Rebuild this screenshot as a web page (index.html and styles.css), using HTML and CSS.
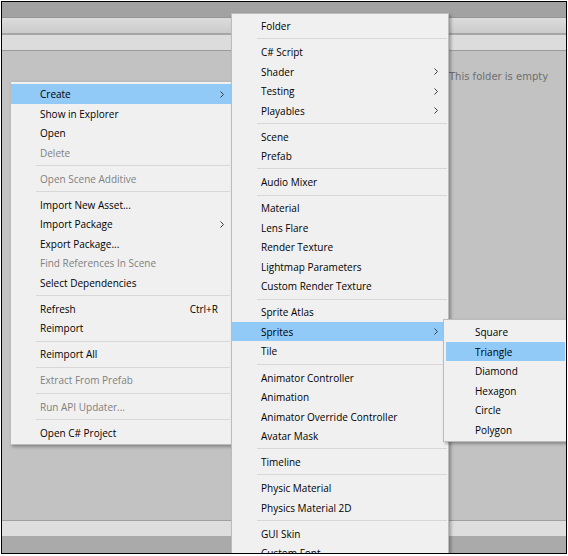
FILE: index.html
```html
<!DOCTYPE html>
<html lang="en">
<head>
  <meta charset="UTF-8" />
  <title>Project - Create menu</title>
  <link rel="stylesheet" href="styles.css">
</head>
<body>
<div class="frame">
  <div class="topbar"></div>
  <div class="toolbar"></div>
  <div class="pathbar"></div>
  <div class="content">
    <div class="tree"></div>
    <div class="assets"><span class="empty-note">This folder is empty</span></div>
  </div>
  <div class="statusbar"></div>
  <div class="footer"></div>

  <!-- context menu -->
  <ul class="menu menu-main">
    <li class="item active">Create <svg class="arrow" width="4" height="7"><path d="M0.5 0.5 L3.5 3.5 L0.5 6.5"/></svg></li>
    <li class="item">Show in Explorer</li>
    <li class="item">Open</li>
    <li class="item disabled">Delete</li>
    <li class="sep"></li>
    <li class="item disabled">Open Scene Additive</li>
    <li class="sep"></li>
    <li class="item">Import New Asset...</li>
    <li class="item">Import Package <svg class="arrow" width="4" height="7"><path d="M0.5 0.5 L3.5 3.5 L0.5 6.5"/></svg></li>
    <li class="item">Export Package...</li>
    <li class="item disabled">Find References In Scene</li>
    <li class="item">Select Dependencies</li>
    <li class="sep"></li>
    <li class="item">Refresh <span class="shortcut">Ctrl+R</span></li>
    <li class="item">Reimport</li>
    <li class="sep"></li>
    <li class="item">Reimport All</li>
    <li class="sep"></li>
    <li class="item disabled">Extract From Prefab</li>
    <li class="sep"></li>
    <li class="item disabled">Run API Updater...</li>
    <li class="sep"></li>
    <li class="item">Open C# Project</li>
  </ul>

  <!-- Create submenu -->
  <ul class="menu menu-create">
    <li class="item">Folder</li>
    <li class="sep"></li>
    <li class="item">C# Script</li>
    <li class="item">Shader <svg class="arrow" width="4" height="7"><path d="M0.5 0.5 L3.5 3.5 L0.5 6.5"/></svg></li>
    <li class="item">Testing <svg class="arrow" width="4" height="7"><path d="M0.5 0.5 L3.5 3.5 L0.5 6.5"/></svg></li>
    <li class="item">Playables <svg class="arrow" width="4" height="7"><path d="M0.5 0.5 L3.5 3.5 L0.5 6.5"/></svg></li>
    <li class="sep"></li>
    <li class="item">Scene</li>
    <li class="item">Prefab</li>
    <li class="sep"></li>
    <li class="item">Audio Mixer</li>
    <li class="sep"></li>
    <li class="item">Material</li>
    <li class="item">Lens Flare</li>
    <li class="item">Render Texture</li>
    <li class="item">Lightmap Parameters</li>
    <li class="item">Custom Render Texture</li>
    <li class="sep"></li>
    <li class="item">Sprite Atlas</li>
    <li class="item active">Sprites <svg class="arrow" width="4" height="7"><path d="M0.5 0.5 L3.5 3.5 L0.5 6.5"/></svg></li>
    <li class="item">Tile</li>
    <li class="sep"></li>
    <li class="item">Animator Controller</li>
    <li class="item">Animation</li>
    <li class="item">Animator Override Controller</li>
    <li class="item">Avatar Mask</li>
    <li class="sep"></li>
    <li class="item">Timeline</li>
    <li class="sep"></li>
    <li class="item">Physic Material</li>
    <li class="item">Physics Material 2D</li>
    <li class="sep"></li>
    <li class="item">GUI Skin</li>
    <li class="item">Custom Font</li>
  </ul>

  <!-- Sprites submenu -->
  <ul class="menu menu-sprites">
    <li class="item">Square</li>
    <li class="item active">Triangle</li>
    <li class="item">Diamond</li>
    <li class="item">Hexagon</li>
    <li class="item">Circle</li>
    <li class="item">Polygon</li>
  </ul>
</div>
</body>
</html>
```

FILE: styles.css
```css
html, body {
  margin: 0;
  padding: 0;
  background: #ffffff;
}
.frame {
  position: relative;
  margin: 1px;
  width: 564px;
  height: 551px;
  border: 1px solid #000;
  display: flex;
  flex-direction: column;
  overflow: hidden;
  font-family: "Open Sans", "Noto Sans", sans-serif;
}
.topbar {
  height: 15px;
  background: #a2a2a2;
  border-bottom: 1px solid #959595;
}
.toolbar {
  height: 15px;
  background: linear-gradient(#dcdcdc, #cbcbcb);
  border-bottom: 2px solid #a6a6a6;
}
.pathbar {
  height: 15px;
  background: #dcdcdc;
  border-bottom: 1px solid #9b9b9b;
}
.content {
  flex: 1;
  display: flex;
  background: #c2c2c2;
  border-bottom: 1px solid #a0a0a0;
}
.tree {
  width: 445px;
}
.assets {
  flex: 1;
  padding: 12px 0 0 2px;
}
.empty-note {
  font-family: "DejaVu Sans", sans-serif;
  font-size: 10px;
  color: #6e6e6e;
  white-space: nowrap;
}
.statusbar {
  height: 15px;
  background: #dedede;
}
.footer {
  height: 17px;
  background: #aaaaaa;
}

/* menus */
.menu {
  position: absolute;
  margin: 0;
  padding: 2px 0;
  list-style: none;
  background: #f0f0f0;
  border: 1px solid #bcbcbc;
  box-shadow: 2px 2px 3px rgba(0, 0, 0, 0.3);
  box-sizing: border-box;
  font-size: 10px;
  color: #000;
}
.menu-main {
  left: 8px;
  top: 79px;
  width: 222px;
}
.menu-create {
  left: 229px;
  top: 11px;
  width: 218px;
}
.menu-sprites {
  left: 441px;
  top: 317px;
  width: 125px;
  padding: 2px 2px;
}
.item {
  position: relative;
  height: 19.5px;
  line-height: 21.5px;
  padding-left: 29px;
  white-space: nowrap;
}
.item.active {
  background: #91c9f7;
}
.item.disabled {
  color: #808080;
}
.arrow {
  position: absolute;
  right: 7px;
  top: 6.5px;
  fill: none;
  stroke: #3c3c3c;
  stroke-width: 1;
}
.menu-create .arrow {
  right: 10px;
}
.shortcut {
  position: absolute;
  right: 13px;
}
.sep {
  height: 1px;
  margin: 2.8px 1px 2.8px 25px;
  background: #d7d7d7;
}
```
